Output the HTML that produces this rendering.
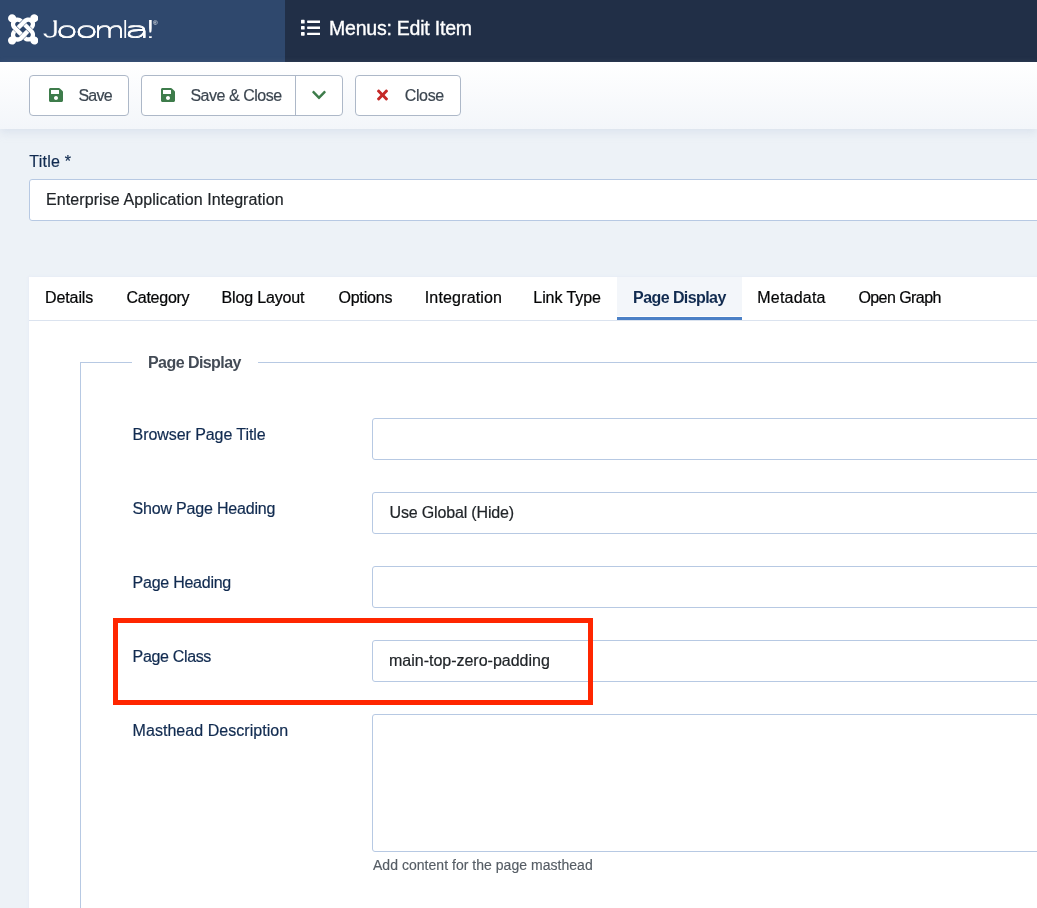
<!DOCTYPE html>
<html lang="en">
<head>
<meta charset="utf-8">
<title>Menus: Edit Item</title>
<style>
*{box-sizing:border-box;margin:0;padding:0}
html,body{width:1037px;height:908px;overflow:hidden}
body{background:#edf2f7;font-family:"Liberation Sans",Arial,sans-serif;font-size:16px;color:#212529;position:relative}
.abs{position:absolute}
#header{left:0;top:0;width:1037px;height:62px;background:#212f47}
#logo{left:0;top:0;width:285px;height:62px;background:#2f486d}
#ptitle{left:329px;top:15px;color:#fff;font-size:19.5px;line-height:26px;white-space:nowrap;font-weight:400;-webkit-text-stroke:.35px #fff}
#subhead{left:0;top:62px;width:1037px;height:67px;background:linear-gradient(#fff,#f3f6fa);box-shadow:0 4px 8px rgba(190,203,222,.36)}
.btn{position:absolute;top:75px;height:41px;background:#fff;border:1px solid #adb8c8;border-radius:4px;font-size:16px;line-height:39px;color:#3c4650;-webkit-text-stroke:.2px #3c4650;white-space:nowrap}
.btn span{position:absolute;top:0}
.lbl{position:absolute;color:#112b50;-webkit-text-stroke:.2px #112b50;transform:translateX(.6px);font-size:16px;line-height:20px;white-space:nowrap}
.inp{position:absolute;background:#fff;border:1px solid #b7c9e3;border-radius:3px;font-size:16px;line-height:40px;color:#212529;-webkit-text-stroke:.2px #212529;white-space:nowrap;overflow:hidden}
#card{left:29px;top:277px;width:1020px;height:640px;background:#fff;box-shadow:0 0 3px rgba(215,222,246,.45)}
.tab{position:absolute;top:277px;height:43px;line-height:42px;font-size:16px;color:#050607;-webkit-text-stroke:.22px #050607;white-space:nowrap}

#t1{letter-spacing:-.1px}#t2{letter-spacing:-.26px;margin-left:.5px}#t3{letter-spacing:-.15px;margin-left:-.5px}#t4{letter-spacing:-.18px;margin-left:.4px}#t5{letter-spacing:.17px;margin-left:-.3px}#t6{letter-spacing:-.08px;margin-left:-.7px}#t7{letter-spacing:-.58px;margin-left:.1px}#t8{letter-spacing:.21px;margin-left:-.7px}#t9{letter-spacing:-.56px;margin-left:.4px}
#leg{letter-spacing:-.56px}
#l1{letter-spacing:-.07px}#l2{letter-spacing:-.19px}#l3{letter-spacing:-.25px}#l4{letter-spacing:-.34px}#l5{letter-spacing:.04px}
#v2{letter-spacing:-.16px;text-indent:-.5px}#v4{letter-spacing:-.01px;text-indent:-1px}
#hint{letter-spacing:.03px;margin-left:1px}
#b1{letter-spacing:-.73px;margin-left:.4px}#b2{letter-spacing:-.47px;margin-left:.4px}#b3{letter-spacing:-.35px;margin-left:.7px}
#ltitle{letter-spacing:.25px;transform:translateX(.2px)}#vtitle{letter-spacing:.08px;text-indent:.1px}
#ptitle{letter-spacing:-.22px}

.jl span{position:absolute;transform-origin:0 0;font-size:20px;line-height:24px;color:#fff;white-space:nowrap;display:block}
.jl .dj{font-family:"DejaVu Sans Light","DejaVu Sans","Liberation Sans",sans-serif;font-weight:200}
.jl .ls{font-family:"Liberation Sans",Arial,sans-serif}
.ic{position:absolute;top:87px;height:16px}
</style>
</head>
<body>
<div id="root" style="position:absolute;left:0;top:0;width:1037px;height:908px;overflow:hidden;will-change:transform">
<div id="header" class="abs"></div>
<div id="logo" class="abs">
<svg class="abs" style="left:7.7px;top:11.5px" width="30.4" height="34.74" viewBox="0 0 448 512"><path fill="#fff" d="M.6 92.1C.6 58.8 27.4 32 60.4 32c30 0 54.500 21.900 59.200 50.200 32.600-7.600 67.100.600 96.500 30l-44.300 44.300c-20.500-20.500-42.600-16.300-55.400-3.500-14.300 14.300-14.300 37.900 0 52.200l99.500 99.500-44 44.300c-87.700-87.200-49.700-49.700-99.800-99.700-26.800-26.500-35-64.800-24.800-98.900C20.400 144.600.6 120.700.6 92.100zm129.500 116.400l44.300 44.300c10-10 89.700-89.700 99.700-99.800 14.300-14.300 37.600-14.300 51.900 0 12.800 12.800 17 35-3.500 55.400l44 44.300c31.200-31.200 38.500-67.600 28.900-101.200 29.200-4.100 51.900-29.200 51.900-59.500 0-33.200-26.800-60.100-59.800-60.100-30.300 0-55.400 22.500-59.500 51.600-33.800-9.900-71.700-1.500-98.300 25.100-18.300 19.100-71.100 71.500-99.600 99.900zm266.300 152.200c8.200-32.700-.9-68.500-26.300-93.900-11.800-12.200 5 4.700-99.500-99.700l-44.300 44.300 99.700 99.700c14.300 14.300 14.300 37.600 0 51.900-12.800 12.800-35 17-55.400-3.500l-44 44.300c27.600 30.200 68 38.800 102.700 28 5.500 27.400 29.700 48.100 58.900 48.100 33 0 59.800-26.800 59.800-60.100 0-30.200-22.500-55-51.600-59.100zm-84.300-53.100l-44-44.300c-87 86.400-50.400 50.400-99.700 99.800-14.300 14.300-37.600 14.300-51.900 0-13.100-13.400-16.900-35.300 3.200-55.400l-44-44.300c-30.200 30.200-38 65.200-29.500 98.300-26.700 6-46.200 29.900-46.200 58.200C0 453.200 26.800 480 59.800 480c28.600 0 52.500-19.800 58.600-46.700 34.200 9.500 71.900 1.500 99.500-26.200 14.700-14.600 84.200-83.800 94.200-99.500z"/></svg>
<div class="jl"><span class="ls" style="left:43px;top:13px;transform:translate(-0.56px,0.11px) scale(1.707,1.311);-webkit-text-stroke:.35px #2f486d;clip-path:polygon(64% 0,100% 0,100% 100%,0 100%,0 45%,64% 45%)">J</span><span class="dj" style="left:55px;top:18px;transform:translate(0.72px,-1.31px) scale(1.833,1.098);-webkit-text-stroke:.12px #fff;text-shadow:0 .45px 0 #fff,0 -.45px 0 #fff">o</span><span class="dj" style="left:74px;top:18px;transform:translate(0.65px,-1.30px) scale(1.931,1.098);-webkit-text-stroke:.12px #fff;text-shadow:0 .45px 0 #fff,0 -.45px 0 #fff">o</span><span class="dj" style="left:94px;top:18px;transform:translate(-0.23px,0.01px) scale(1.609,1.034);-webkit-text-stroke:.12px #fff;text-shadow:0 .45px 0 #fff,0 -.45px 0 #fff">m</span><span class="dj" style="left:121px;top:16px;transform:translate(-0.06px,-0.07px) scale(1.567,1.174);-webkit-text-stroke:.12px #fff">l</span><span class="dj" style="left:124px;top:18px;transform:translate(0.58px,-0.38px) scale(2.069,1.056);-webkit-text-stroke:.12px #fff;text-shadow:0 .45px 0 #fff,0 -.45px 0 #fff">a</span><span class="dj" style="left:141px;top:15px;transform:translate(-0.61px,-0.25px) scale(2.445,1.198);-webkit-text-stroke:.12px #fff">!</span><span class="ls" style="left:153px;top:19px;transform:translate(0.05px,0.24px) scale(0.315,0.294);">®</span></div>
</div>
<svg class="abs" style="left:300.9px;top:18px" width="19.5" height="19.5" viewBox="0 0 512 512"><path fill="#fff" d="M80 368H16a16 16 0 0 0-16 16v64a16 16 0 0 0 16 16h64a16 16 0 0 0 16-16v-64a16 16 0 0 0-16-16zm0-320H16A16 16 0 0 0 0 64v64a16 16 0 0 0 16 16h64a16 16 0 0 0 16-16V64a16 16 0 0 0-16-16zm0 160H16a16 16 0 0 0-16 16v64a16 16 0 0 0 16 16h64a16 16 0 0 0 16-16v-64a16 16 0 0 0-16-16zm416 176H176a16 16 0 0 0-16 16v32a16 16 0 0 0 16 16h320a16 16 0 0 0 16-16v-32a16 16 0 0 0-16-16zm0-320H176a16 16 0 0 0-16 16v32a16 16 0 0 0 16 16h320a16 16 0 0 0 16-16V80a16 16 0 0 0-16-16zm0 160H176a16 16 0 0 0-16 16v32a16 16 0 0 0 16 16h320a16 16 0 0 0 16-16v-32a16 16 0 0 0-16-16z"/></svg>
<div id="ptitle" class="abs">Menus: Edit Item</div>

<div id="subhead" class="abs"></div>

<div class="btn" style="left:29px;width:100px"><span id="b1" style="left:48px">Save</span></div>
<div class="btn" style="left:141px;width:202px"><span id="b2" style="left:48px">Save &amp; Close</span><i style="position:absolute;left:153px;top:0;width:1px;height:39px;background:#adb8c8"></i></div>
<div class="btn" style="left:355px;width:106px"><span id="b3" style="left:48px">Close</span></div>

<svg class="ic" style="left:49px" width="14" viewBox="0 0 448 512"><path fill="#3e7c4b" d="M433.941 129.941l-83.882-83.882A48 48 0 0 0 316.118 32H48C21.490 32 0 53.490 0 80v352c0 26.510 21.490 48 48 48h352c26.510 0 48-21.490 48-48V163.882a48 48 0 0 0-14.059-33.941zM224 416c-35.346 0-64-28.654-64-64 0-35.346 28.654-64 64-64s64 28.654 64 64c0 35.346-28.654 64-64 64zm96-304.520V212c0 6.627-5.373 12-12 12H76c-6.627 0-12-5.373-12-12V108c0-6.627 5.373-12 12-12h228.520c3.183 0 6.235 1.264 8.485 3.515l3.480 3.480A11.996 11.996 0 0 1 320 111.480z"/></svg>
<svg class="ic" style="left:161.2px" width="14" viewBox="0 0 448 512"><path fill="#3e7c4b" d="M433.941 129.941l-83.882-83.882A48 48 0 0 0 316.118 32H48C21.490 32 0 53.490 0 80v352c0 26.510 21.490 48 48 48h352c26.510 0 48-21.490 48-48V163.882a48 48 0 0 0-14.059-33.941zM224 416c-35.346 0-64-28.654-64-64 0-35.346 28.654-64 64-64s64 28.654 64 64c0 35.346-28.654 64-64 64zm96-304.520V212c0 6.627-5.373 12-12 12H76c-6.627 0-12-5.373-12-12V108c0-6.627 5.373-12 12-12h228.520c3.183 0 6.235 1.264 8.485 3.515l3.480 3.480A11.996 11.996 0 0 1 320 111.480z"/></svg>
<svg class="ic" style="left:312.3px" width="14" viewBox="0 0 448 512"><path fill="#3e7c4b" d="M207.029 381.476L12.686 187.132c-9.373-9.373-9.373-24.569 0-33.941l22.667-22.667c9.357-9.357 24.522-9.375 33.901-.04L224 284.505l154.745-154.021c9.379-9.335 24.544-9.317 33.901.04l22.667 22.667c9.373 9.373 9.373 24.569 0 33.941L240.971 381.476c-9.373 9.372-24.569 9.372-33.942 0z"/></svg>
<svg class="ic" style="left:377px" width="11" viewBox="0 0 352 512"><path fill="#c52827" d="M242.72 256l100.070-100.070c12.280-12.280 12.280-32.190 0-44.480l-22.240-22.240c-12.280-12.280-32.190-12.280-44.480 0L176 189.280 75.930 89.210c-12.280-12.280-32.190-12.280-44.480 0L9.210 111.450c-12.280 12.280-12.280 32.190 0 44.480L109.280 256 9.210 356.070c-12.280 12.280-12.280 32.190 0 44.480l22.240 22.240c12.280 12.280 32.200 12.280 44.480 0L176 322.720l100.070 100.070c12.280 12.280 32.200 12.280 44.480 0l22.240-22.240c12.280-12.280 12.280-32.190 0-44.480L242.720 256z"/></svg>

<div class="lbl" id="ltitle" style="left:29px;top:152px">Title *</div>
<div class="inp" style="left:29px;top:179px;width:1020px;height:42px;padding-left:16px" id="vtitle">Enterprise Application Integration</div>

<div id="card" class="abs"></div>
<div class="abs" style="left:29px;top:320px;width:1008px;height:1px;background:#dbe3ef"></div>
<div class="abs" style="left:617px;top:277px;width:125px;height:39px;background:#f3f6fa"></div><div class="abs" style="left:617px;top:317px;width:125px;height:3px;background:#4b80c6"></div>
<div class="tab" id="t1" style="left:45px">Details</div>
<div class="tab" id="t2" style="left:126px">Category</div>
<div class="tab" id="t3" style="left:222px">Blog Layout</div>
<div class="tab" id="t4" style="left:338px">Options</div>
<div class="tab" id="t5" style="left:425px">Integration</div>
<div class="tab" id="t6" style="left:534px">Link Type</div>
<div class="tab" id="t7" style="left:633px;font-weight:700;color:#112b50;-webkit-text-stroke:0">Page Display</div>
<div class="tab" id="t8" style="left:758px">Metadata</div>
<div class="tab" id="t9" style="left:858px">Open Graph</div>

<div class="abs" style="left:80px;top:362px;width:980px;height:600px;border:1px solid #b7c9e3"></div>
<div class="abs" style="left:132px;top:350px;width:126px;height:26px;background:#fff"></div>
<div class="abs" style="left:148px;top:353px;font-weight:700;font-size:16px;line-height:20px;color:#434b56;white-space:nowrap" id="leg">Page Display</div>

<div class="lbl" id="l1" style="left:132px;top:425px">Browser Page Title</div>
<div class="inp" style="left:372px;top:418px;width:700px;height:42px"></div>
<div class="lbl" id="l2" style="left:132px;top:499px">Show Page Heading</div>
<div class="inp" style="left:372px;top:492px;width:700px;height:42px;padding-left:17px" id="v2">Use Global (Hide)</div>
<div class="lbl" id="l3" style="left:132px;top:573px">Page Heading</div>
<div class="inp" style="left:372px;top:566px;width:700px;height:42px"></div>
<div class="lbl" id="l4" style="left:132px;top:647px">Page Class</div>
<div class="inp" style="left:372px;top:640px;width:700px;height:42px;padding-left:17px" id="v4">main-top-zero-padding</div>
<div class="lbl" id="l5" style="left:132px;top:721px">Masthead Description</div>
<div class="inp" style="left:372px;top:714px;width:700px;height:138px"></div>
<div class="abs" style="left:372px;top:856px;font-size:14px;line-height:18px;color:#555c64;-webkit-text-stroke:.15px #555c64;white-space:nowrap" id="hint">Add content for the page masthead</div>

<div class="abs" style="left:113px;top:618px;width:480px;height:87px;border:5px solid #ff2600"></div>
</div>
</body>
</html>
